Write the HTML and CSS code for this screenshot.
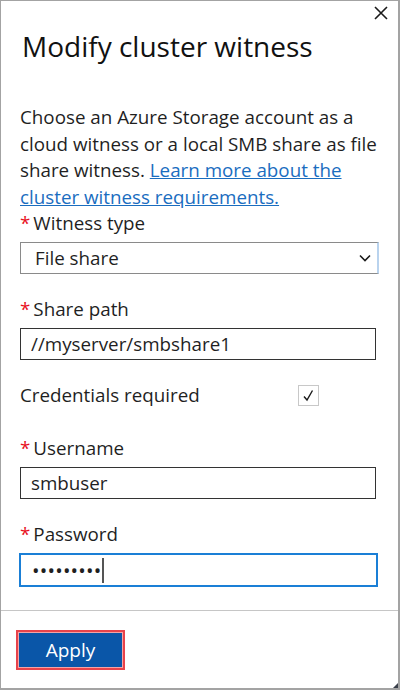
FILE: index.html
```html
<!DOCTYPE html>
<html lang="en">
<head>
  <meta charset="UTF-8" />
  <meta name="viewport" content="width=device-width, initial-scale=1.0"/>
  <title>Modify cluster witness</title>
  <link rel="stylesheet" href="styles.css">
</head>
<body>
  <div class="panel">
    <button class="close" aria-label="Close">
      <svg width="14" height="14" viewBox="0 0 14 14">
        <path d="M1 1 L13 13 M13 1 L1 13" stroke="#1a1a1a" stroke-width="1.6" fill="none"/>
      </svg>
    </button>

    <div class="content">
      <h1>Modify cluster witness</h1>
      <p class="intro">
        Choose an Azure Storage account as a cloud witness or a local SMB share as file share witness.
        <a href="#">Learn more about the cluster witness requirements.</a>
      </p>

      <div class="field">
        <label class="required">Witness type</label>
        <div class="select">
          <span>File share</span>
          <svg width="12" height="8" viewBox="0 0 12 8">
            <path d="M1 1.5 L6 6.5 L11 1.5" stroke="#1a1a1a" stroke-width="1.6" fill="none"/>
          </svg>
        </div>
      </div>

      <div class="field">
        <label class="required">Share path</label>
        <input type="text" value="//myserver/smbshare1">
      </div>

      <div class="check-row">
        <span class="check-label">Credentials required</span>
        <span class="checkbox">
          <svg width="13" height="13" viewBox="0 0 13 13">
            <path d="M2 7.5 L5 11 L10.5 1.5" stroke="#1a1a1a" stroke-width="1.4" fill="none"/>
          </svg>
        </span>
      </div>

      <div class="field">
        <label class="required">Username</label>
        <input type="text" value="smbuser">
      </div>

      <div class="field">
        <label class="required">Password</label>
        <div class="input focused">&bull;&bull;&bull;&bull;&bull;&bull;&bull;&bull;&bull;<span class="caret"></span></div>
      </div>
    </div>

    <div class="footer">
      <button class="apply">Apply</button>
    </div>
    <span class="grip"></span>
  </div>
</body>
</html>
```

FILE: styles.css
```css
* {
  box-sizing: border-box;
}

body {
  margin: 0;
  font-family: 'Open Sans', 'Noto Sans', sans-serif;
  color: #1f1f1f;
  background-color: #fff;
}

.panel {
  position: relative;
  width: 400px;
  height: 690px;
  border: 1px solid #a3a3a3;
  border-right-width: 2px;
  border-bottom-width: 2px;
  display: flex;
  flex-direction: column;
}

.close {
  position: absolute;
  top: 5px;
  right: 10px;
  border: none;
  background: none;
  padding: 0;
  cursor: pointer;
}

/* corner resize handle */
.grip {
  position: absolute;
  right: 0;
  bottom: 0;
  width: 0;
  height: 0;
  border-left: 5px solid transparent;
  border-bottom: 5px solid #3a3f4a;
}

.content {
  flex: 1;
  padding: 28px 12px 0 19px;
}

h1 {
  font-size: 28px;
  font-weight: 400;
  line-height: 34px;
  margin: 0 0 41px 2px;
  color: #111;
}

.intro {
  font-size: 18.8px;
  line-height: 26.5px;
  margin: 0;
}

.intro a {
  color: #1a6dbf;
  text-decoration: underline;
}

.field label {
  display: block;
  font-size: 18.8px;
  line-height: 26px;
}

.required::before {
  content: "*";
  color: #e81123;
  margin-right: 3px;
}

.field {
  margin-bottom: 22px;
}

.field label {
  margin-bottom: 6px;
}

.select {
  display: flex;
  justify-content: space-between;
  align-items: center;
  width: 359px;
  height: 32px;
  padding: 0 6px 0 14px;
  border: 1px solid #8a8a8a;
  border-right: 2px solid #b9d3ee;
  font-size: 18.8px;
}

input,
.input {
  display: block;
  width: 356px;
  height: 32px;
  padding: 0 10px;
  border: 1px solid #333;
  font-family: inherit;
  font-size: 18.8px;
  color: #1f1f1f;
  outline: none;
}

.input {
  display: flex;
  align-items: center;
}

.input.focused {
  width: 359px;
  height: 34px;
  margin-left: -1px;
  border: 2px solid #1a7fd6;
  padding-left: 11px;
  letter-spacing: 0.2px;
  font-size: 20px;
}

.caret {
  display: inline-block;
  width: 2px;
  height: 25px;
  background-color: #555;
  margin-left: 1px;
}

.check-row {
  display: flex;
  align-items: center;
  font-size: 18.8px;
  line-height: 26px;
  margin: 2px 0 27px 0;
}

.check-label {
  width: 278px;
}

.checkbox {
  display: flex;
  align-items: center;
  justify-content: center;
  width: 21px;
  height: 21px;
  border: 1px solid #c8c8c8;
}

.footer {
  border-top: 1px solid #c6c6c6;
  height: 78px;
  padding: 22px 0 0 18px;
}

.apply {
  width: 103px;
  height: 34px;
  border: none;
  background-color: #0a56a8;
  color: #fff;
  font-family: inherit;
  font-size: 19px;
  box-shadow: 0 0 0 1px #f4a3a5, 0 0 0 3px #e8434b;
  cursor: pointer;
}
```
